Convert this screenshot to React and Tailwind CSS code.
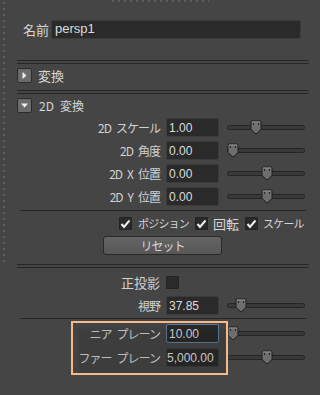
import React from 'react';

const jp = { fontFamily: '"Noto Sans CJK JP", "Noto Sans", sans-serif' };
const num = { fontFamily: '"Liberation Sans", Arial, sans-serif' };

const Input = ({ value, focused, className = '' }) => (
  <div
    className={`h-[19px] flex-none rounded-[2px] border bg-[#2a2a2a] overflow-hidden flex items-center text-[12px] text-[#dddddd] whitespace-nowrap ${
      focused ? 'border-[#5d7d9c]' : 'border-[#3b3b3b]'
    } ${className}`}
    style={num}
  >
    {value}
  </div>
);

const Thumb = () => (
  <svg width="12" height="15" viewBox="0 0 12 15">
    <path
      d="M1 2 Q1 1 2 1 H10 Q11 1 11 2 V9.5 L6 14 L1 9.5 Z"
      fill="#6e6e6e"
      stroke="#1f1f1f"
      strokeWidth="1"
    />
    <path d="M2 2 H10" stroke="#909090" strokeWidth="1" />
    <rect x="3" y="3" width="1" height="2" fill="#222222" />
    <rect x="8" y="3" width="1" height="2" fill="#222222" />
  </svg>
);

const Slider = ({ pos }) => (
  <div className="relative flex-none ml-[8px] w-[78px] h-[19px] flex items-center">
    <div className="w-full h-[5px] rounded-full bg-[#3a3a3a] border border-[#252525]" />
    <div className="absolute top-[2px]" style={{ left: pos }}>
      <Thumb />
    </div>
  </div>
);

const FieldRow = ({ label, value, pos, focused, className = '', inputClass = 'pl-[2px]' }) => (
  <div className={`flex items-center h-[19px] ${className}`}>
    <div className="w-[143px] flex-none whitespace-nowrap text-right text-[12px] text-[#d2d2d2] leading-none tracking-[-1px]" style={jp}>
      {label}
    </div>
    <Input value={value} focused={focused} className={`ml-[6px] w-[53px] ${inputClass}`} />
    <Slider pos={pos} />
  </div>
);

const DoubleLine = ({ className = '' }) => (
  <div className={`flex flex-col gap-[2px] ${className}`}>
    <div className="h-px bg-[#262626]" />
    <div className="h-px bg-[#262626]" />
  </div>
);

const Toggle = ({ open }) => (
  <div className="w-[15px] h-[15px] flex-none rounded-[2px] bg-[#6a6a6a] border border-[#2c2c2c] flex items-center justify-center">
    <svg width="7" height="7" viewBox="0 0 7 7">
      {open ? <path d="M0 1.5 H7 L3.5 5.5 Z" fill="#f2f2f2" /> : <path d="M1.5 0 V7 L5.5 3.5 Z" fill="#f2f2f2" />}
    </svg>
  </div>
);

const Check = ({ checked }) => (
  <div className="w-[13px] h-[13px] flex-none rounded-[1px] bg-[#2a2a2a] border border-[#232323] flex items-center justify-center">
    {checked && (
      <svg width="11" height="10" viewBox="0 0 11 10">
        <path d="M1.5 5 L4 8 L9.5 1.5" fill="none" stroke="#f0f0f0" strokeWidth="2" />
      </svg>
    )}
  </div>
);

export default function App() {
  return (
    <div className="relative w-[320px] h-[395px] bg-[#454545] overflow-hidden" style={jp}>
      {/* grip dots */}
      <div className="absolute left-[3px] top-[2px] w-[2px] h-[260px] bg-[repeating-linear-gradient(to_bottom,#5f5f5f_0_2px,transparent_2px_6px)]" />
      <div className="absolute top-0 left-[112px] w-[97px] h-[2px] bg-[repeating-linear-gradient(to_right,#5f5f5f_0_2px,transparent_2px_6px)]" />

      <div className="flex flex-col pl-[17px] pr-[11px] pt-[20px]">
        {/* name */}
        <div className="flex items-center h-[18px] pl-[6px]">
          <span className="text-[13px] text-[#d6d6d6] leading-none whitespace-nowrap">名前</span>
          <Input value="persp1" className="ml-[2px] w-[250px] h-[18px] pl-[3px] text-[13px]" />
        </div>

        <DoubleLine className="mt-[22px]" />

        <div className="flex items-center mt-[4px] h-[15px]">
          <Toggle />
          <span className="ml-[6px] text-[13px] text-[#d6d6d6] leading-none whitespace-nowrap">変換</span>
        </div>

        <DoubleLine className="mt-[7px]" />

        <div className="flex items-center mt-[4px] h-[15px]">
          <Toggle open />
          <span className="ml-[7px] text-[12px] text-[#d6d6d6] leading-none whitespace-nowrap">2D&ensp;変換</span>
        </div>

        <div className="flex flex-col gap-[4px] mt-[5px]">
          <FieldRow label={'2D\u2002スケール'} value="1.00" pos={23} />
          <FieldRow label={'2D\u2002角度'} value="0.00" pos={0} />
          <FieldRow label={'2D\u2002X\u2002位置'} value="0.00" pos={34} />
          <FieldRow label={'2D\u2002Y\u2002位置'} value="0.00" pos={34} />
        </div>

        <div className="h-px bg-[#262626] ml-[3px] mr-[3px] mt-[4px]" />

        <div className="flex items-center h-[13px] mt-[6px] pl-[102px] text-[11px] text-[#d6d6d6] leading-none tracking-[-0.8px] whitespace-nowrap">
          <Check checked />
          <span className="ml-[6px]">ポジション</span>
          <div className="ml-[6px]"><Check checked /></div>
          <span className="ml-[5px] text-[13px] tracking-normal">回転</span>
          <div className="ml-[6px]"><Check checked /></div>
          <span className="ml-[5px]">スケール</span>
        </div>

        <div className="mt-[6px] ml-[86px] w-[119px] h-[19px] rounded-[3px] border border-[#2a2a2a] bg-[linear-gradient(#646464,#575757)] flex items-center justify-center text-[12px] text-[#d8d8d8] leading-none tracking-[-1px]">
          リセット
        </div>

        <DoubleLine className="mt-[9px]" />

        <div className="flex items-center h-[13px] mt-[8px]">
          <div className="w-[143px] flex-none text-right text-[13px] text-[#d2d2d2] leading-none">正投影</div>
          <div className="ml-[6px]"><Check /></div>
        </div>

        <FieldRow label="視野" value="37.85" pos={8} className="mt-[7px]" />

        <div className="h-px bg-[#262626] ml-[3px] mr-[3px] mt-[3px]" />

        <div className="flex flex-col gap-[5px] mt-[5px]">
          <FieldRow label={'ニア\u2002プレーン'} value="10.00" pos={0} focused />
          <FieldRow label={'ファー\u2002プレーン'} value="5,000.00" pos={34} inputClass="pl-0" />
        </div>
      </div>

      {/* annotation box */}
      <div className="absolute left-[71px] top-[321px] w-[157px] h-[54px] border-2 border-[#f8b988] overflow-hidden">
        <div className="absolute left-[5px] top-[5px] right-[-4px] bottom-[-4px] bg-black/10 blur-[2px]" />
      </div>
    </div>
  );
}
